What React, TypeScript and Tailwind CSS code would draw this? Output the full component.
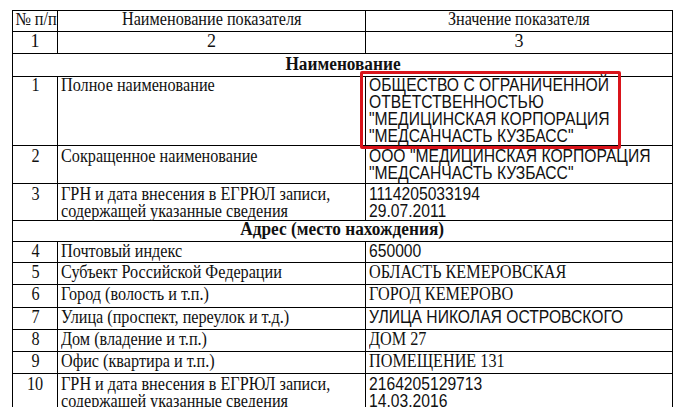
const serif = "font-['Liberation_Serif','Times_New_Roman',serif]";
const sans = "font-['Liberation_Sans',Arial,sans-serif]";

type Row =
  | { kind: "section"; title: string; h: string; pt: string }
  | { kind: "data"; n: string; name: string[]; value: string[]; sansValue: boolean; h: string; pt: string };

const rows: Row[] = [
  { kind: "section", title: "Наименование", h: "h-[23px]", pt: "pt-[2px]" },
  {
    kind: "data",
    n: "1",
    name: ["Полное наименование"],
    value: ["ОБЩЕСТВО С ОГРАНИЧЕННОЙ", "ОТВЕТСТВЕННОСТЬЮ", '"МЕДИЦИНСКАЯ КОРПОРАЦИЯ', '"МЕДСАНЧАСТЬ КУЗБАСС"'],
    sansValue: true,
    h: "h-[68px]",
    pt: "pt-0",
  },
  {
    kind: "data",
    n: "2",
    name: ["Сокращенное наименование"],
    value: ['ООО "МЕДИЦИНСКАЯ КОРПОРАЦИЯ', '"МЕДСАНЧАСТЬ КУЗБАСС"'],
    sansValue: true,
    h: "h-[38px]",
    pt: "pt-[2px]",
  },
  {
    kind: "data",
    n: "3",
    name: ["ГРН и дата внесения в ЕГРЮЛ записи,", "содержащей указанные сведения"],
    value: ["1114205033194", "29.07.2011"],
    sansValue: true,
    h: "h-[37px]",
    pt: "pt-[2px]",
  },
  { kind: "section", title: "Адрес (место нахождения)", h: "h-[21px]", pt: "pt-0" },
  { kind: "data", n: "4", name: ["Почтовый индекс"], value: ["650000"], sansValue: true, h: "h-[21px]", pt: "pt-[1px]" },
  { kind: "data", n: "5", name: ["Субъект Российской Федерации"], value: ["ОБЛАСТЬ КЕМЕРОВСКАЯ"], sansValue: false, h: "h-[22px]", pt: "pt-[1px]" },
  { kind: "data", n: "6", name: ["Город (волость и т.п.)"], value: ["ГОРОД КЕМЕРОВО"], sansValue: false, h: "h-[23px]", pt: "pt-[1px]" },
  { kind: "data", n: "7", name: ["Улица (проспект, переулок и т.д.)"], value: ["УЛИЦА НИКОЛАЯ ОСТРОВСКОГО"], sansValue: true, h: "h-[22px]", pt: "pt-[1px]" },
  { kind: "data", n: "8", name: ["Дом (владение и т.п.)"], value: ["ДОМ 27"], sansValue: false, h: "h-[22px]", pt: "pt-[1px]" },
  { kind: "data", n: "9", name: ["Офис (квартира и т.п.)"], value: ["ПОМЕЩЕНИЕ 131"], sansValue: false, h: "h-[22px]", pt: "pt-[1px]" },
  {
    kind: "data",
    n: "10",
    name: ["ГРН и дата внесения в ЕГРЮЛ записи,", "содержащей указанные сведения"],
    value: ["2164205129713", "14.03.2016"],
    sansValue: true,
    h: "h-[38px]",
    pt: "pt-[2px]",
  },
];

const cell = "border border-black px-[3px] pb-0 align-top leading-[17px] whitespace-nowrap";

// the pdf text is drawn narrower than the stock fonts, so squeeze it a little
const Sq = ({ children, center, narrow }: { children: React.ReactNode; center?: boolean; narrow?: boolean }) => (
  <span className={`inline-block ${center ? "origin-center" : "origin-left"} ${narrow ? "scale-x-[0.87]" : "scale-x-[0.9]"}`}>
    {children}
  </span>
);

export default function App() {
  return (
    <div className={`relative w-[688px] h-[407px] overflow-hidden bg-white pl-[12px] pt-[10px] text-[#111] ${serif}`}>
      <table className="w-[660px] table-fixed border-collapse text-[18px]">
        <colgroup>
          <col className="w-[45px]" />
          <col className="w-[308px]" />
          <col className="w-[307px]" />
        </colgroup>
        <tbody>
          <tr className="h-[21px]">
            <td className={`${cell} pt-0 text-center !px-0`}>
              <Sq center>№ п/п</Sq>
            </td>
            <td className={`${cell} pt-0 text-center`}>
              <Sq center>Наименование показателя</Sq>
            </td>
            <td className={`${cell} pt-0 text-center`}>
              <Sq center>Значение показателя</Sq>
            </td>
          </tr>
          <tr className="h-[22px]">
            <td className={`${cell} pt-[1px] text-center`}>1</td>
            <td className={`${cell} pt-[1px] text-center`}>2</td>
            <td className={`${cell} pt-[1px] text-center`}>3</td>
          </tr>
          {rows.map((row, i) =>
            row.kind === "section" ? (
              <tr key={i} className={row.h}>
                <td colSpan={3} className={`${cell} ${row.pt} text-center font-bold`}>
                  <span className="inline-block origin-center scale-x-[0.96]">{row.title}</span>
                </td>
              </tr>
            ) : (
              <tr key={i} className={row.h}>
                <td className={`${cell} ${row.pt} text-center`}>
                  <Sq center>{row.n}</Sq>
                </td>
                <td className={`${cell} ${row.pt}`}>
                  {row.name.map((l, j) => (
                    <div key={j}>
                      <Sq>{l}</Sq>
                    </div>
                  ))}
                </td>
                <td className={`${cell} ${row.pt} ${row.sansValue ? sans : ""}`}>
                  {row.value.map((l, j) => (
                    <div key={j}>
                      <Sq narrow={row.sansValue}>{l}</Sq>
                    </div>
                  ))}
                </td>
              </tr>
            )
          )}
        </tbody>
      </table>
      {/* red highlight around the full name */}
      <div className="absolute left-[360px] top-[71px] w-[261px] h-[78px] border-[3px] border-[#d9141b] rounded-[2px]" />
    </div>
  );
}
